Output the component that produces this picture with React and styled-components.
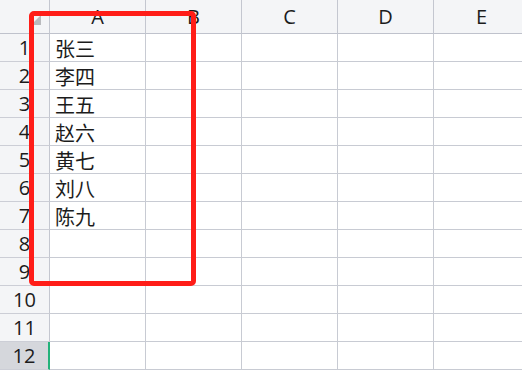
import React from "react";
import styled, { createGlobalStyle } from "styled-components";

const names = ["张三", "李四", "王五", "赵六", "黄七", "刘八", "陈九"];
const columns = ["A", "B", "C", "D", "E"];
const rowCount = 12;
const selectedRow = 12;

const GlobalStyle = createGlobalStyle`
    html, body {
        margin: 0;
        padding: 0;
        background: #ffffff;
        overflow: hidden;
    }
`;

const App = () => {
    const rows = Array.from({ length: rowCount }, (_, i) => i + 1);

    return (
        <>
            <GlobalStyle />
            <SheetStyle>
                <GridStyle>
                    <CornerStyle>
                        <CornerMarkStyle />
                    </CornerStyle>
                    {columns.map((col) => (
                        <ColHeaderStyle key={col}>{col}</ColHeaderStyle>
                    ))}

                    {rows.map((row) => (
                        <React.Fragment key={row}>
                            <RowHeaderStyle $selected={row === selectedRow}>{row}</RowHeaderStyle>
                            {columns.map((col) => (
                                <CellStyle key={col}>
                                    {col === "A" ? names[row - 1] || "" : ""}
                                </CellStyle>
                            ))}
                        </React.Fragment>
                    ))}
                </GridStyle>

                <HighlightStyle />
            </SheetStyle>
        </>
    );
};

export default App;

// ==========================================   STYLES   ========================================== //

const SheetStyle = styled.div`
    position: relative;
    width: 522px;
    height: 371px;
    overflow: hidden;
    font-family: "Open Sans", "Noto Sans CJK SC", sans-serif;
    color: #1c1c1c;
`;

const GridStyle = styled.div`
    display: grid;
    grid-template-columns: 50px repeat(5, 96px);
    grid-template-rows: 34px repeat(${rowCount}, 28px);
`;

const HeaderCellBase = styled.div`
    box-sizing: border-box;
    background: #f4f5f7;
    border-right: 1px solid #c4c7d0;
    border-bottom: 1px solid #bfc2cc;
    display: flex;
    align-items: center;
    justify-content: center;
    font-size: 20px;
    line-height: 1;
`;

const CornerStyle = styled(HeaderCellBase)`
    position: relative;
`;

const CornerMarkStyle = styled.div`
    position: absolute;
    left: 31px;
    top: 15px;
    width: 0;
    height: 0;
    border-left: 10px solid transparent;
    border-bottom: 10px solid #b9babd;
`;

const ColHeaderStyle = styled(HeaderCellBase)`
    padding-top: 1px;
`;

const RowHeaderStyle = styled(HeaderCellBase)`
    background: ${({ $selected }) => ($selected ? "#d5d7dc" : "#f4f5f7")};
    border-right: ${({ $selected }) => ($selected ? "2px solid #23b27a" : "1px solid #c4c7d0")};
    border-bottom-color: #ccced6;
    padding-top: 1px;
`;

const CellStyle = styled.div`
    box-sizing: border-box;
    border-right: 1px solid #c8cbd3;
    border-bottom: 1px solid #c8cbd3;
    display: flex;
    align-items: center;
    padding: 2px 0 0 5px;
    font-family: "Noto Sans CJK SC", sans-serif;
    font-size: 20px;
    line-height: 1;
    white-space: nowrap;
`;

const HighlightStyle = styled.div`
    position: absolute;
    left: 29px;
    top: 11px;
    width: 167px;
    height: 275px;
    box-sizing: border-box;
    border: 5px solid #ff1d18;
    border-radius: 5px;
    pointer-events: none;
`;
